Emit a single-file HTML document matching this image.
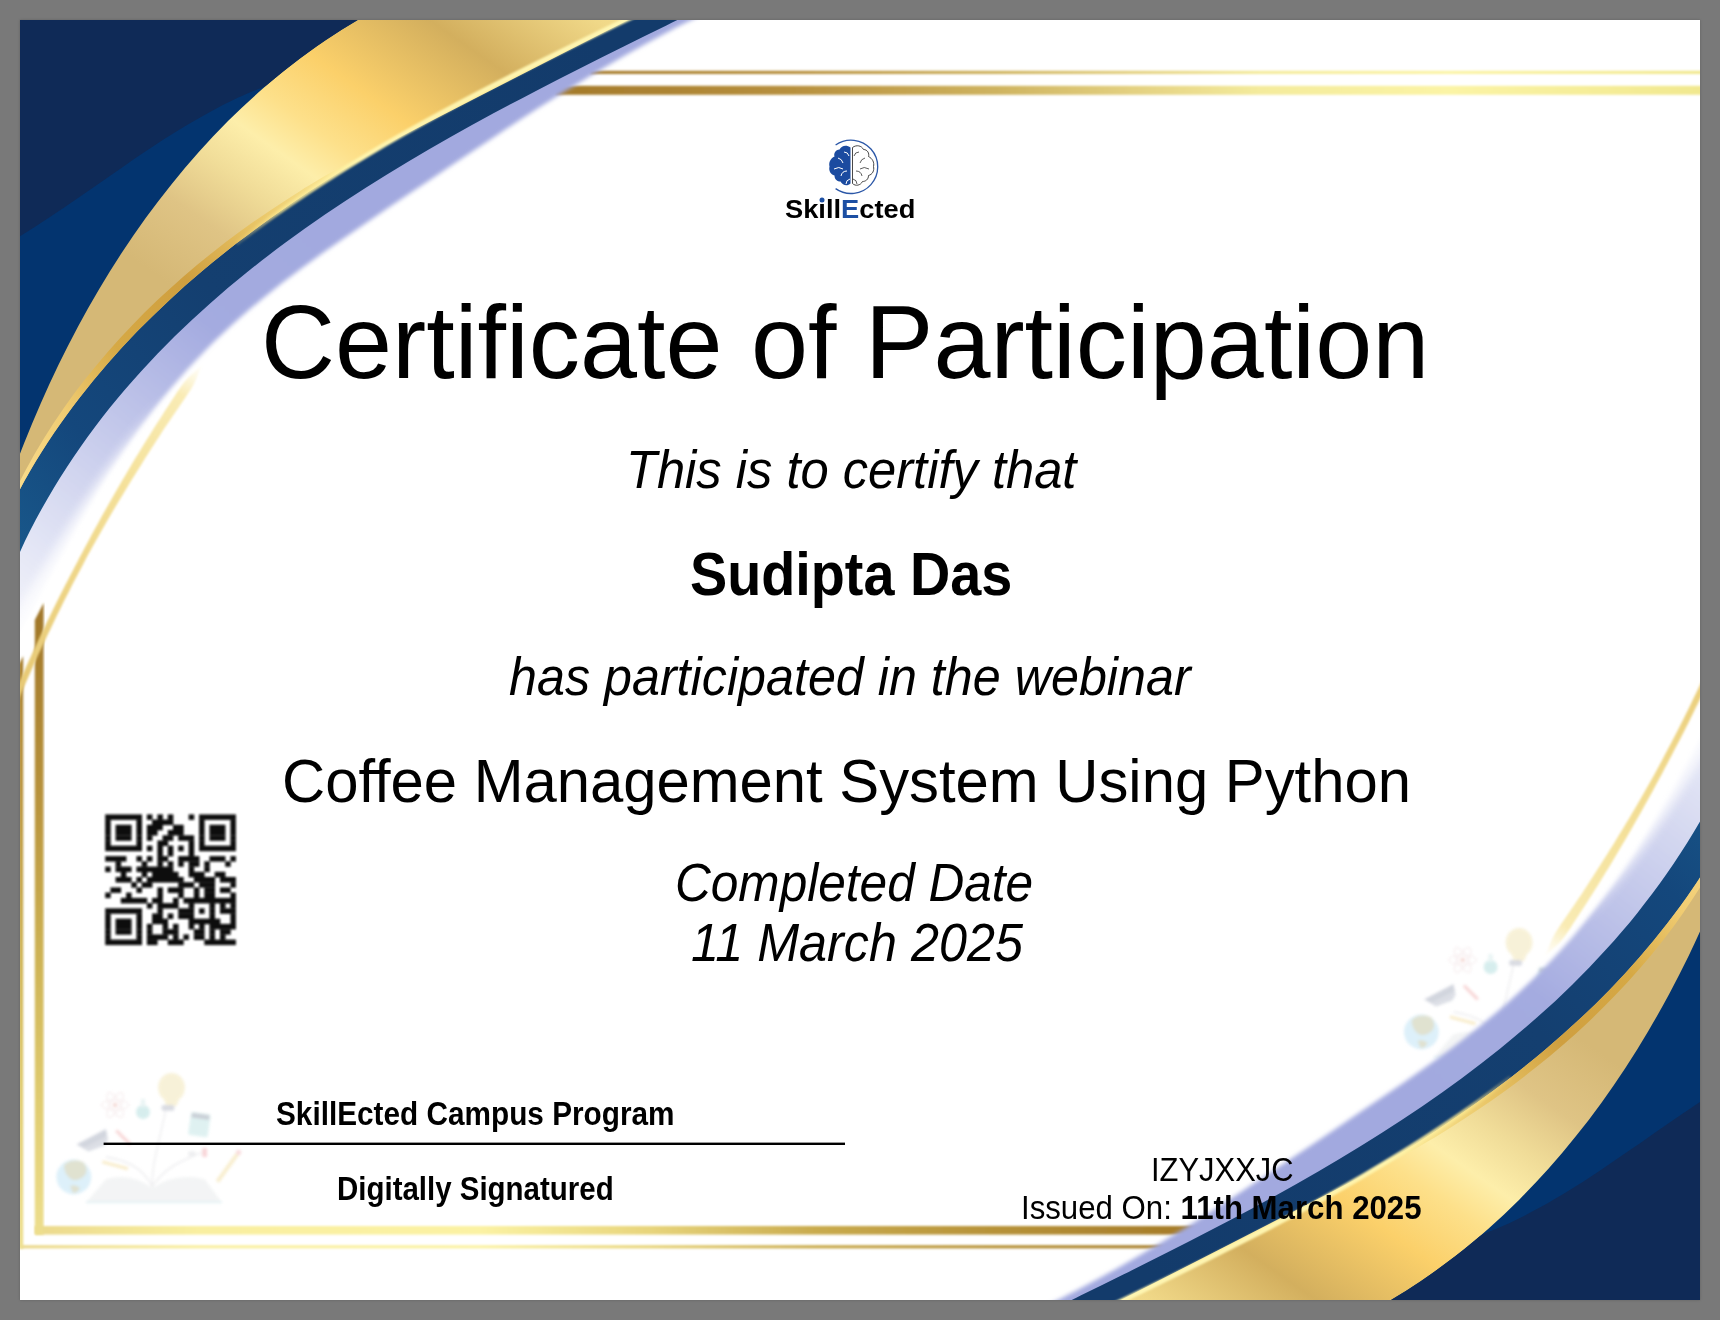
<!DOCTYPE html>
<html><head><meta charset="utf-8"><title>Certificate of Participation</title>
<style>
html,body{margin:0;padding:0}
body{width:1720px;height:1320px;background:#797979;position:relative;overflow:hidden;font-family:"Liberation Sans",sans-serif;color:#000}
#cert{position:absolute;left:20px;top:20px;width:1680px;height:1280px;background:#fff;box-shadow:0 0 2.5px rgba(0,0,0,.22)}
.t{position:absolute;white-space:nowrap;line-height:1;transform-origin:0 0}
.t i{font-style:italic}
</style></head><body>
<div id="cert"></div>
<svg width="1720" height="1320" viewBox="0 0 1720 1320" style="position:absolute;left:0;top:0">
<defs>
<clipPath id="cB"><path d="M399.9,-2.6C393.6,0.7 374.3,10.4 362.0,17.5C349.6,24.6 337.6,32.2 325.9,40.1C314.1,48.0 302.7,56.3 291.5,65.0C280.3,73.7 269.5,82.7 258.9,92.1C248.3,101.4 238.0,111.1 228.0,121.1C218.0,131.1 208.3,141.4 198.8,151.9C189.4,162.5 180.2,173.3 171.4,184.4C162.5,195.4 153.9,206.8 145.5,218.3C137.2,229.8 129.1,241.6 121.3,253.5C113.5,265.4 106.0,277.5 98.8,289.8C91.5,302.1 84.5,314.5 77.8,327.1C71.1,339.6 64.6,352.3 58.4,365.1C52.2,377.9 46.3,390.8 40.6,403.7C34.9,416.6 29.5,429.7 24.3,442.7C19.1,455.8 11.9,475.5 9.5,482.0L-10,482.0L-10,-10L399.9,-10Z"/></clipPath>
<clipPath id="cE"><path d="M718.1,6.9C710.3,10.7 686.8,22.0 671.5,30.0C656.2,38.0 641.1,46.3 626.2,54.7C611.2,63.2 596.5,72.0 581.9,80.9C567.2,89.8 552.8,98.9 538.3,108.1C523.9,117.3 509.6,126.7 495.3,136.2C480.9,145.6 466.7,155.2 452.4,164.8C438.1,174.4 423.8,184.0 409.5,193.6C395.1,203.3 380.7,212.9 366.4,222.7C352.1,232.4 337.7,242.2 323.7,252.3C309.6,262.3 295.6,272.5 282.0,283.1C268.5,293.7 255.1,304.5 242.2,315.8C229.4,327.1 216.9,338.8 204.9,350.9C193.0,363.1 181.5,375.7 170.5,388.7C159.5,401.7 148.9,415.2 138.8,428.9C128.6,442.7 118.9,456.9 109.6,471.3C100.3,485.7 91.5,500.5 82.8,515.4C74.2,530.3 66.1,545.7 57.9,560.8C49.6,576.0 41.7,591.3 33.3,606.3C24.9,621.4 11.8,643.4 7.5,650.9L-10,650.9L-10,-10L718.1,-10Z"/></clipPath>
<clipPath id="cp"><rect x="20" y="20" width="1680" height="1280"/></clipPath>
<filter id="b1" x="-5%" y="-5%" width="110%" height="110%"><feGaussianBlur stdDeviation="0.8"/></filter>
<filter id="b2" x="-5%" y="-5%" width="110%" height="110%"><feGaussianBlur stdDeviation="2"/></filter>
<filter id="b6" x="-20%" y="-20%" width="140%" height="140%"><feGaussianBlur stdDeviation="5"/></filter>
<filter id="bq" x="-5%" y="-5%" width="110%" height="110%"><feGaussianBlur stdDeviation="1.15"/></filter>
<filter id="b3" x="-5%" y="-5%" width="110%" height="110%"><feGaussianBlur stdDeviation="1.8"/></filter>
<linearGradient id="gG" gradientUnits="userSpaceOnUse" x1="600" y1="0" x2="324.5" y2="393">
<stop offset="0" stop-color="#f3dc8c"/><stop offset=".04" stop-color="#f0d888"/><stop offset=".238" stop-color="#d3af5e"/><stop offset=".44" stop-color="#fbd06a"/><stop offset=".56" stop-color="#fde08a"/><stop offset=".643" stop-color="#fdeeaa"/><stop offset=".74" stop-color="#f0dc98"/><stop offset=".85" stop-color="#dfc485"/><stop offset="1" stop-color="#d5b876"/>
</linearGradient>
<linearGradient id="gS" gradientUnits="userSpaceOnUse" x1="330" y1="170" x2="20" y2="490">
<stop offset="0" stop-color="#fbe896"/><stop offset=".2" stop-color="#e9c566"/><stop offset=".4" stop-color="#cf9f3f"/><stop offset=".62" stop-color="#d6a945"/><stop offset=".8" stop-color="#f0cc72"/><stop offset="1" stop-color="#f9dc8c"/>
</linearGradient>
<linearGradient id="gD" gradientUnits="userSpaceOnUse" x1="600" y1="40" x2="20" y2="540">
<stop offset="0" stop-color="#133b6b"/><stop offset=".6" stop-color="#143f70"/><stop offset=".85" stop-color="#14477c"/><stop offset="1" stop-color="#185689"/>
</linearGradient>
<linearGradient id="gP" gradientUnits="userSpaceOnUse" x1="330" y1="230" x2="20" y2="620">
<stop offset="0" stop-color="#a2a9df"/><stop offset=".3" stop-color="#a4abe0"/><stop offset=".55" stop-color="#c0c5e9"/><stop offset=".8" stop-color="#dcdff3"/><stop offset="1" stop-color="#f1f2fa"/>
</linearGradient>
<linearGradient id="gH" gradientUnits="userSpaceOnUse" x1="640" y1="20" x2="225" y2="255">
<stop offset="0" stop-color="#fff7b4"/><stop offset=".65" stop-color="#fff4ac"/><stop offset=".85" stop-color="#fbe88f" stop-opacity=".8"/><stop offset="1" stop-color="#f3d578" stop-opacity="0"/>
</linearGradient>
<linearGradient id="gF" gradientUnits="userSpaceOnUse" x1="203" y1="364" x2="20" y2="693">
<stop offset="0" stop-color="#fbf0c0" stop-opacity="0"/><stop offset=".1" stop-color="#f9ebb4"/><stop offset=".35" stop-color="#f5e29c"/><stop offset=".65" stop-color="#efd688"/><stop offset="1" stop-color="#e6c873"/>
</linearGradient>
<linearGradient id="gT" gradientUnits="userSpaceOnUse" x1="560" y1="0" x2="1700" y2="0">
<stop offset="0" stop-color="#a47a2a"/><stop offset=".21" stop-color="#b8913f"/><stop offset=".386" stop-color="#cfb460"/><stop offset=".5" stop-color="#e3d080"/><stop offset=".614" stop-color="#f4eb9c"/><stop offset=".78" stop-color="#fbf4a5"/><stop offset="1" stop-color="#f1e88f"/>
</linearGradient>
<linearGradient id="gBt" gradientUnits="userSpaceOnUse" x1="1200" y1="0" x2="20" y2="0">
<stop offset="0" stop-color="#a47a28"/><stop offset=".185" stop-color="#b8943a"/><stop offset=".326" stop-color="#c9ab4e"/><stop offset=".469" stop-color="#e8d57c"/><stop offset=".61" stop-color="#fbf2a3"/><stop offset=".85" stop-color="#f9efa0"/><stop offset="1" stop-color="#ead78a"/>
</linearGradient>
<linearGradient id="gV" gradientUnits="userSpaceOnUse" x1="0" y1="604" x2="0" y2="1248">
<stop offset="0" stop-color="#a07628"/><stop offset=".3" stop-color="#b8933c"/><stop offset=".54" stop-color="#cdb254"/><stop offset=".77" stop-color="#e0cc70"/><stop offset="1" stop-color="#eee090"/>
</linearGradient>
</defs>
<g clip-path="url(#cp)">
<g filter="url(#b1)">
<rect x="590" y="70.8" width="1120" height="3.2" fill="url(#gT)"/>
<rect x="555" y="85.8" width="1155" height="9" fill="url(#gT)"/>
<rect x="35" y="1226" width="1190" height="8.6" fill="url(#gBt)"/>
<rect x="20" y="1245.2" width="1230" height="3.2" fill="url(#gBt)"/>
</g>
<g id="il" filter="url(#b3)" opacity=".7">
<path d="M86,1202.600L105.800,1179.300Q130,1172 152.300,1188Q176,1172 204.700,1179.300L222,1202.600Z" fill="#eef0f1"/>
<rect x="86" y="1201" width="136" height="2.200" fill="#dcedf0"/>
<path d="M152.300,1188C151,1165 160,1140 165.500,1111M152,1186C142,1166 124,1160 106,1157M152.600,1186C166,1166 184,1160 203,1152" fill="none" stroke="#e3e3e6" stroke-width="1.300"/>
<ellipse cx="171.500" cy="1087.400" rx="13.400" ry="14.500" fill="#f5ecc8"/><path d="M162.500,1096h18l-4,10h-10z" fill="#f5ecc8"/><rect x="161.600" y="1105" width="12.800" height="5.700" rx="2" fill="#c9ccd6"/>
<circle cx="73.800" cy="1177" r="17.400" fill="#cfeaf8"/><path d="M64,1165q8,-7 19,-3q6,6 2,13q-5,6 -12,5q-9,-4 -9,-15z" fill="#d3d6bd"/><path d="M70,1186q6,-2 10,2q-2,5 -7,5z" fill="#d3d6bd"/>
<path d="M76.700,1144.400L105.800,1129.300L108.100,1139.800L104.700,1145.600L88.400,1151.400Z" fill="#cdd1db"/><path d="M76.700,1144.400L105.800,1129.300L107,1136L84,1147.500Z" fill="#bfc4d0"/>
<circle cx="143" cy="1112" r="7" fill="#c5e6e6"/><rect x="140.800" y="1099" width="4.400" height="8" fill="#e0f0f0"/>
<g fill="none" stroke="#f0e0e2" stroke-width="1"><ellipse cx="115.100" cy="1105" rx="14" ry="5"/><ellipse cx="115.100" cy="1105" rx="14" ry="5" transform="rotate(60 115.100 1105)"/><ellipse cx="115.100" cy="1105" rx="14" ry="5" transform="rotate(120 115.100 1105)"/></g><circle cx="115.100" cy="1105" r="2.200" fill="#efc6c0"/>
<g transform="rotate(8 199.400 1124.600)"><rect x="189.500" y="1113" width="19.800" height="23.300" rx="2" fill="#d2ecec"/><rect x="190.500" y="1114" width="17.800" height="4.600" fill="#b4bcc6"/></g>
<path d="M115.200,1131.600l2.200,-2.200l13.900,13.900l-2.200,2.200z" fill="#f4c3c3"/>
<path d="M101.900,1163.300l0.800,-2.900l25.600,6.900l-0.800,2.900z" fill="#f5e3b0"/>
<path d="M236.800,1151.400l3.200,2.400l-21,29l-3.200,-2.400z" fill="#f5e6b8"/><circle cx="238.600" cy="1152.400" r="2.600" fill="#f6cdd0"/>
<rect x="202.300" y="1148" width="4.700" height="9" fill="#f5c2c6"/><rect x="188.400" y="1151.400" width="7" height="4.600" fill="#e6e7ea"/>
</g>
<use href="#il" transform="translate(1347.6,-145)"/>
<g id="sw1">
<path d="M718.1,6.9C710.3,10.7 686.8,22.0 671.5,30.0C656.2,38.0 641.1,46.3 626.2,54.7C611.2,63.2 596.5,72.0 581.9,80.9C567.2,89.8 552.8,98.9 538.3,108.1C523.9,117.3 509.6,126.7 495.3,136.2C480.9,145.6 466.7,155.2 452.4,164.8C438.1,174.4 423.8,184.0 409.5,193.6C395.1,203.3 380.7,212.9 366.4,222.7C352.1,232.4 337.7,242.2 323.7,252.3C309.6,262.3 295.6,272.5 282.0,283.1C268.5,293.7 255.1,304.5 242.2,315.8C229.4,327.1 216.9,338.8 204.9,350.9C193.0,363.1 181.5,375.7 170.5,388.7C159.5,401.7 148.9,415.2 138.8,428.9C128.6,442.7 118.9,456.9 109.6,471.3C100.3,485.7 91.5,500.5 82.8,515.4C74.2,530.3 66.1,545.7 57.9,560.8C49.6,576.0 41.7,591.3 33.3,606.3C24.9,621.4 11.8,643.4 7.5,650.9L-10,650.9L-10,-10L718.1,-10Z" fill="url(#gP)" filter="url(#b2)"/>
<path d="M718.1,6.9C714.3,8.7 703.0,14.1 695.5,17.8C687.9,21.5 680.5,25.3 673.1,29.2C665.6,33.0 658.2,37.0 650.9,41.0C643.5,45.0 636.2,49.1 628.9,53.2C621.6,57.3 614.4,61.5 607.2,65.8C599.9,70.0 592.7,74.3 585.6,78.6C578.4,83.0 571.3,87.4 564.2,91.8C557.1,96.2 550.0,100.7 542.9,105.2C535.8,109.7 528.8,114.2 521.8,118.8C514.8,123.4 507.8,127.9 500.8,132.6C493.8,137.2 486.8,141.8 479.8,146.4C472.8,151.1 465.9,155.7 458.9,160.4C452.0,165.1 445.0,169.7 438.1,174.4C431.1,179.1 424.2,183.8 417.2,188.4C410.3,193.1 403.3,197.8 396.4,202.5C389.4,207.1 382.5,211.8 375.5,216.5C368.6,221.2 361.6,225.9 354.7,230.6C347.8,235.3 340.9,240.1 334.1,244.9C327.2,249.7 320.4,254.6 313.6,259.5C306.8,264.4 300.1,269.4 293.4,274.4C286.7,279.5 280.1,284.6 273.5,289.8C267.0,295.0 260.4,300.3 254.0,305.7C247.6,311.1 241.3,316.5 235.1,322.1C228.8,327.7 222.7,333.4 216.7,339.3C210.6,345.1 204.7,351.0 198.9,357.1C193.1,363.1 187.5,369.3 181.9,375.6C176.3,381.8 171.0,388.3 165.5,394.6C160.1,401.0 154.6,407.3 149.2,413.7C143.8,420.2 138.4,426.6 133.1,433.2C127.8,439.7 122.7,446.4 117.6,453.1C112.6,459.8 107.6,466.7 102.8,473.5C97.9,480.4 93.1,487.4 88.4,494.4C83.8,501.4 79.2,508.5 74.6,515.6C70.1,522.7 65.7,529.9 61.3,537.1C56.9,544.3 52.6,551.5 48.3,558.7C43.9,565.9 39.6,573.1 35.3,580.2C31.0,587.4 26.5,594.4 22.3,601.6C18.0,608.8 14.1,616.1 10.0,623.3C5.8,630.4 -0.6,641.0 -2.7,644.6L17.8,657.1C19.9,653.5 26.5,642.6 30.8,635.3C35.0,627.9 39.3,620.6 43.2,613.1C47.1,605.7 50.5,598.0 54.2,590.4C57.8,582.8 61.4,575.2 65.0,567.6C68.6,560.1 72.1,552.5 75.8,545.0C79.4,537.5 83.1,530.0 86.9,522.5C90.6,515.1 94.4,507.7 98.4,500.3C102.3,493.0 106.3,485.7 110.4,478.4C114.6,471.2 118.8,464.0 123.1,456.8C127.5,449.7 131.9,442.6 136.5,435.6C141.1,428.6 145.7,421.6 150.5,414.8C155.4,408.0 160.3,401.2 165.5,394.6C170.8,388.1 176.3,381.8 181.9,375.6C187.5,369.3 193.1,363.1 198.9,357.1C204.7,351.0 210.6,345.1 216.7,339.3C222.7,333.4 228.8,327.7 235.1,322.1C241.3,316.5 247.6,311.1 254.0,305.7C260.4,300.3 267.0,295.0 273.5,289.8C280.1,284.6 286.7,279.5 293.4,274.4C300.1,269.4 306.8,264.4 313.6,259.5C320.4,254.6 327.2,249.7 334.1,244.9C340.9,240.1 347.8,235.3 354.7,230.6C361.6,225.9 368.6,221.2 375.5,216.5C382.5,211.8 389.4,207.1 396.4,202.5C403.3,197.8 410.3,193.1 417.2,188.4C424.2,183.8 431.1,179.1 438.1,174.4C445.0,169.7 452.0,165.1 458.9,160.4C465.9,155.7 472.8,151.1 479.8,146.4C486.8,141.8 493.8,137.2 500.8,132.6C507.8,127.9 514.8,123.4 521.8,118.8C528.8,114.2 535.8,109.7 542.9,105.2C550.0,100.7 557.1,96.2 564.2,91.8C571.3,87.4 578.4,83.0 585.6,78.6C592.7,74.3 599.9,70.0 607.2,65.8C614.4,61.5 621.6,57.3 628.9,53.2C636.2,49.1 643.5,45.0 650.9,41.0C658.2,37.0 665.6,33.0 673.1,29.2C680.5,25.3 687.9,21.5 695.5,17.8C703.0,14.1 714.3,8.7 718.1,6.9Z" fill="#fff" opacity=".75" filter="url(#b6)"/>
</g>
<use href="#sw1" transform="translate(1747,1321) rotate(180)"/>
<g filter="url(#b1)">
<path d="M34.8,1234.6V620L43.6,603V1234.6Z" fill="url(#gV)"/>
<path d="M19,1248.4V664L23.2,656V1248.4Z" fill="url(#gV)"/>
</g>
<g id="sw2">
<path d="M709.1,4.4C701.9,7.9 680.7,18.3 666.4,25.4C652.1,32.4 637.6,39.5 623.2,46.7C608.8,53.8 594.3,61.1 579.8,68.4C565.3,75.7 550.8,83.1 536.4,90.7C521.9,98.2 507.4,105.8 493.0,113.6C478.7,121.4 464.3,129.2 450.1,137.3C435.8,145.4 421.6,153.6 407.6,162.0C393.5,170.4 379.6,178.9 365.8,187.7C352.1,196.5 338.4,205.4 325.0,214.6C311.5,223.8 298.2,233.2 285.2,242.8C272.2,252.5 259.3,262.3 246.7,272.5C234.2,282.6 221.8,293.0 209.8,303.7C197.7,314.4 185.9,325.4 174.5,336.6C163.0,347.9 151.8,359.5 141.0,371.4C130.2,383.3 119.7,395.5 109.6,408.1C99.6,420.7 89.8,433.6 80.5,446.9C71.2,460.2 62.3,473.9 53.8,487.9C45.4,502.0 37.3,516.4 29.8,531.3C22.3,546.2 12.1,569.5 8.6,577.1L-10,577.1L-10,-10L709.1,-10Z" fill="url(#gD)"/>
<path d="M659.1,4.0C652.5,7.1 633.1,16.5 620.0,22.7C606.9,29.0 593.8,35.4 580.6,41.8C567.4,48.2 554.2,54.6 541.0,61.2C527.8,67.8 514.6,74.4 501.4,81.2C488.2,87.9 475.0,94.7 461.9,101.7C448.8,108.7 435.7,115.7 422.7,123.0C409.7,130.2 396.8,137.5 383.9,145.0C371.1,152.6 358.4,160.2 345.7,168.0C333.1,175.9 320.6,183.9 308.3,192.1C296.0,200.3 283.7,208.6 271.7,217.2C259.7,225.8 247.9,234.6 236.2,243.6C224.6,252.6 213.1,261.8 201.9,271.3C190.7,280.7 179.7,290.4 169.0,300.4C158.2,310.4 147.7,320.6 137.5,331.1C127.3,341.6 117.4,352.3 107.7,363.4C98.1,374.4 88.8,385.8 79.8,397.4C70.8,409.1 62.1,421.0 53.8,433.3C45.5,445.6 37.5,458.2 29.9,471.2C22.4,484.1 12.0,504.4 8.4,511.1L-10,511.1L-10,-10L659.1,-10Z" fill="url(#gG)"/>
<path d="M331.6,172.1C326.5,175.2 310.8,184.3 300.6,190.7C290.4,197.1 280.2,203.6 270.2,210.4C260.2,217.1 250.3,224.0 240.6,231.1C230.9,238.2 221.3,245.5 211.9,253.0C202.5,260.4 193.2,268.1 184.1,276.0C175.1,283.8 166.2,291.9 157.5,300.1C148.8,308.3 140.2,316.8 132.0,325.4C123.7,334.0 115.6,342.9 107.7,351.9C99.9,361.0 92.2,370.2 84.9,379.6C77.5,389.1 70.3,398.7 63.5,408.6C56.6,418.5 50.0,428.5 43.7,438.8C37.4,449.1 31.3,459.6 25.6,470.3C19.8,481.0 11.9,497.6 9.2,503.1L8.4,511.1C12.0,504.4 22.4,484.1 29.9,471.2C37.5,458.2 45.5,445.6 53.8,433.3C62.1,421.0 70.8,409.1 79.8,397.4C88.8,385.8 98.1,374.4 107.7,363.4C117.4,352.3 127.3,341.6 137.5,331.1C147.7,320.6 158.2,310.4 169.0,300.4C179.7,290.4 190.7,280.7 201.9,271.3C213.1,261.8 224.6,252.6 236.2,243.6C247.9,234.6 259.7,225.8 271.7,217.2C283.7,208.6 296.0,200.3 308.3,192.1C320.6,183.9 333.1,175.9 345.7,168.0C358.4,160.2 371.1,152.6 383.9,145.0C396.8,137.5 409.7,130.2 422.7,123.0C435.7,115.7 448.8,108.7 461.9,101.7C475.0,94.7 488.2,87.9 501.4,81.2C514.6,74.4 527.8,67.8 541.0,61.2C554.2,54.6 567.4,48.2 580.6,41.8C593.8,35.4 606.9,29.0 620.0,22.7C633.1,16.5 652.5,7.1 659.1,4.0Z" fill="url(#gS)"/>
<path d="M659.1,4.0C652.5,7.1 633.1,16.5 620.0,22.7C606.9,29.0 593.8,35.4 580.6,41.8C567.4,48.2 554.2,54.6 541.0,61.2C527.8,67.8 514.6,74.4 501.4,81.2C488.2,87.9 475.0,94.7 461.9,101.7C448.8,108.7 435.7,115.7 422.7,123.0C409.7,130.2 396.8,137.5 383.9,145.0C371.1,152.6 358.4,160.2 345.7,168.0C333.1,175.9 320.6,183.9 308.3,192.1C296.0,200.3 283.7,208.6 271.7,217.2C259.7,225.8 242.1,239.2 236.2,243.6" fill="none" stroke="url(#gH)" stroke-width="4.6" filter="url(#b1)"/>
<path d="M399.9,-2.6C393.6,0.7 374.3,10.4 362.0,17.5C349.6,24.6 337.6,32.2 325.9,40.1C314.1,48.0 302.7,56.3 291.5,65.0C280.3,73.7 269.5,82.7 258.9,92.1C248.3,101.4 238.0,111.1 228.0,121.1C218.0,131.1 208.3,141.4 198.8,151.9C189.4,162.5 180.2,173.3 171.4,184.4C162.5,195.4 153.9,206.8 145.5,218.3C137.2,229.8 129.1,241.6 121.3,253.5C113.5,265.4 106.0,277.5 98.8,289.8C91.5,302.1 84.5,314.5 77.8,327.1C71.1,339.6 64.6,352.3 58.4,365.1C52.2,377.9 46.3,390.8 40.6,403.7C34.9,416.6 29.5,429.7 24.3,442.7C19.1,455.8 11.9,475.5 9.5,482.0L-10,482.0L-10,-10L399.9,-10Z" fill="#03346f"/>
<path d="M270.3,84.3C264.9,86.6 248.8,92.8 238.3,97.6C227.9,102.4 217.7,107.7 207.7,113.2C197.6,118.6 187.8,124.5 178.0,130.5C168.3,136.4 158.7,142.7 149.1,149.0C139.6,155.3 130.1,161.9 120.7,168.4C111.3,174.9 101.9,181.5 92.5,188.1C83.1,194.6 73.7,201.2 64.2,207.6C54.7,214.0 45.2,220.4 35.5,226.5C25.9,232.7 11.2,241.4 6.3,244.4L-10,244.4L-10,-10L800,-10L800,84.3Z" fill="#0f2a57" clip-path="url(#cB)"/>
<path d="M202.3,364.5C201.0,365.7 197.2,369.3 194.6,371.8C192.0,374.2 189.3,376.5 186.9,379.1C184.5,381.7 182.5,384.5 180.5,387.3C178.4,390.1 176.6,393.1 174.7,396.0C172.8,398.9 170.9,401.8 169.0,404.7C167.1,407.6 165.2,410.5 163.3,413.4C161.5,416.3 159.6,419.3 157.7,422.2C155.9,425.1 154.0,428.0 152.2,431.0C150.3,433.9 148.5,436.9 146.7,439.8C144.8,442.8 143.0,445.7 141.2,448.7C139.4,451.6 137.6,454.6 135.8,457.6C134.0,460.5 132.2,463.5 130.5,466.5C128.7,469.5 126.9,472.5 125.2,475.5C123.4,478.4 121.6,481.4 119.9,484.4C118.2,487.4 116.4,490.4 114.7,493.5C113.0,496.5 111.3,499.5 109.6,502.5C107.9,505.5 106.2,508.5 104.5,511.6C102.8,514.6 101.1,517.6 99.4,520.7C97.8,523.7 96.1,526.8 94.4,529.8C92.8,532.9 91.1,535.9 89.5,539.0C87.9,542.0 86.2,545.1 84.6,548.1C83.0,551.2 81.4,554.3 79.7,557.3C78.1,560.4 76.5,563.5 74.9,566.5C73.3,569.6 71.7,572.7 70.1,575.7C68.5,578.8 66.9,581.9 65.3,585.0C63.7,588.1 62.2,591.2 60.6,594.3C59.0,597.4 57.5,600.5 56.0,603.6C54.4,606.7 52.9,609.8 51.4,612.9C49.8,616.0 48.3,619.1 46.8,622.3C45.3,625.4 43.8,628.5 42.3,631.6C40.8,634.8 39.4,637.9 37.9,641.1C36.4,644.2 35.0,647.3 33.5,650.5C32.1,653.6 30.6,656.8 29.2,660.0C27.7,663.1 26.3,666.3 24.9,669.4C23.5,672.6 22.1,675.8 20.7,678.9C19.3,682.1 17.9,685.3 16.5,688.5C15.1,691.7 13.8,694.8 12.4,698.0C11.1,701.2 9.7,704.4 8.4,707.6C7.0,710.8 5.0,715.6 4.4,717.2L10.1,719.6C10.8,718.0 12.7,713.2 14.1,710.0C15.4,706.8 16.8,703.6 18.1,700.5C19.5,697.3 20.8,694.1 22.2,690.9C23.6,687.8 25.0,684.6 26.4,681.4C27.8,678.3 29.2,675.1 30.6,672.0C32.0,668.8 33.4,665.7 34.8,662.5C36.2,659.4 37.7,656.2 39.1,653.1C40.6,649.9 42.0,646.8 43.5,643.7C45.0,640.6 46.4,637.4 47.9,634.3C49.4,631.2 50.9,628.1 52.4,625.0C53.9,621.8 55.4,618.7 56.9,615.6C58.4,612.5 60.0,609.4 61.5,606.3C63.0,603.2 64.6,600.1 66.1,597.1C67.7,594.0 69.3,590.9 70.8,587.8C72.4,584.7 74.0,581.7 75.6,578.6C77.2,575.5 78.8,572.5 80.4,569.4C82.0,566.4 83.6,563.3 85.2,560.2C86.8,557.2 88.5,554.2 90.2,551.1C91.8,548.1 93.5,545.1 95.2,542.1C96.9,539.1 98.6,536.1 100.3,533.0C102.0,530.0 103.7,527.0 105.4,524.0C107.1,521.1 108.9,518.1 110.6,515.1C112.4,512.1 114.1,509.1 115.9,506.1C117.6,503.2 119.4,500.2 121.2,497.2C122.9,494.3 124.7,491.3 126.5,488.4C128.3,485.4 130.1,482.5 131.9,479.5C133.7,476.6 135.5,473.6 137.4,470.7C139.2,467.8 141.0,464.8 142.9,461.9C144.7,459.0 146.5,456.1 148.4,453.2C150.3,450.3 152.1,447.4 154.0,444.5C155.9,441.6 157.8,438.7 159.7,435.8C161.5,432.9 163.4,430.0 165.3,427.1C167.3,424.2 169.2,421.4 171.1,418.5C173.0,415.6 174.9,412.8 176.9,409.9C178.8,407.1 180.8,404.2 182.7,401.4C184.7,398.5 186.8,395.8 188.6,392.8C190.5,389.9 192.4,387.0 193.9,383.9C195.5,380.8 196.7,377.4 198.1,374.2C199.5,371.0 201.6,366.1 202.3,364.5Z" fill="url(#gF)" filter="url(#b1)"/>
</g>
<use href="#sw2" transform="translate(1747,1321) rotate(180)"/>
<g filter="url(#bq)" fill="#0c0c0c"><rect x="105.2" y="814.4" width="36.8" height="5.5"/><rect x="146.9" y="814.4" width="5.5" height="5.5"/><rect x="157.4" y="814.4" width="5.5" height="5.5"/><rect x="167.8" y="814.4" width="5.5" height="5.5"/><rect x="188.7" y="814.4" width="5.5" height="5.5"/><rect x="199.1" y="814.4" width="36.8" height="5.5"/><rect x="105.2" y="819.6" width="5.5" height="5.5"/><rect x="136.5" y="819.6" width="5.5" height="5.5"/><rect x="152.1" y="819.6" width="21.2" height="5.5"/><rect x="199.1" y="819.6" width="5.5" height="5.5"/><rect x="230.4" y="819.6" width="5.5" height="5.5"/><rect x="105.2" y="824.8" width="5.5" height="5.5"/><rect x="115.6" y="824.8" width="15.9" height="5.5"/><rect x="136.5" y="824.8" width="5.5" height="5.5"/><rect x="146.9" y="824.8" width="15.9" height="5.5"/><rect x="173.0" y="824.8" width="10.7" height="5.5"/><rect x="199.1" y="824.8" width="5.5" height="5.5"/><rect x="209.5" y="824.8" width="15.9" height="5.5"/><rect x="230.4" y="824.8" width="5.5" height="5.5"/><rect x="105.2" y="830.0" width="5.5" height="5.5"/><rect x="115.6" y="830.0" width="15.9" height="5.5"/><rect x="136.5" y="830.0" width="5.5" height="5.5"/><rect x="146.9" y="830.0" width="10.7" height="5.5"/><rect x="167.8" y="830.0" width="15.9" height="5.5"/><rect x="199.1" y="830.0" width="5.5" height="5.5"/><rect x="209.5" y="830.0" width="15.9" height="5.5"/><rect x="230.4" y="830.0" width="5.5" height="5.5"/><rect x="105.2" y="835.3" width="5.5" height="5.5"/><rect x="115.6" y="835.3" width="15.9" height="5.5"/><rect x="136.5" y="835.3" width="5.5" height="5.5"/><rect x="146.9" y="835.3" width="5.5" height="5.5"/><rect x="162.6" y="835.3" width="10.7" height="5.5"/><rect x="178.2" y="835.3" width="15.9" height="5.5"/><rect x="199.1" y="835.3" width="5.5" height="5.5"/><rect x="209.5" y="835.3" width="15.9" height="5.5"/><rect x="230.4" y="835.3" width="5.5" height="5.5"/><rect x="105.2" y="840.5" width="5.5" height="5.5"/><rect x="136.5" y="840.5" width="5.5" height="5.5"/><rect x="157.4" y="840.5" width="10.7" height="5.5"/><rect x="188.7" y="840.5" width="5.5" height="5.5"/><rect x="199.1" y="840.5" width="5.5" height="5.5"/><rect x="230.4" y="840.5" width="5.5" height="5.5"/><rect x="105.2" y="845.7" width="36.8" height="5.5"/><rect x="146.9" y="845.7" width="5.5" height="5.5"/><rect x="157.4" y="845.7" width="5.5" height="5.5"/><rect x="167.8" y="845.7" width="5.5" height="5.5"/><rect x="178.2" y="845.7" width="5.5" height="5.5"/><rect x="188.7" y="845.7" width="5.5" height="5.5"/><rect x="199.1" y="845.7" width="36.8" height="5.5"/><rect x="157.4" y="850.9" width="5.5" height="5.5"/><rect x="167.8" y="850.9" width="5.5" height="5.5"/><rect x="188.7" y="850.9" width="5.5" height="5.5"/><rect x="105.2" y="856.1" width="21.2" height="5.5"/><rect x="136.5" y="856.1" width="5.5" height="5.5"/><rect x="146.9" y="856.1" width="5.5" height="5.5"/><rect x="157.4" y="856.1" width="10.7" height="5.5"/><rect x="178.2" y="856.1" width="21.2" height="5.5"/><rect x="209.5" y="856.1" width="15.9" height="5.5"/><rect x="230.4" y="856.1" width="5.5" height="5.5"/><rect x="115.6" y="861.3" width="5.5" height="5.5"/><rect x="141.7" y="861.3" width="5.5" height="5.5"/><rect x="157.4" y="861.3" width="5.5" height="5.5"/><rect x="167.8" y="861.3" width="5.5" height="5.5"/><rect x="178.2" y="861.3" width="5.5" height="5.5"/><rect x="188.7" y="861.3" width="10.7" height="5.5"/><rect x="204.3" y="861.3" width="5.5" height="5.5"/><rect x="225.2" y="861.3" width="5.5" height="5.5"/><rect x="105.2" y="866.6" width="5.5" height="5.5"/><rect x="115.6" y="866.6" width="15.9" height="5.5"/><rect x="136.5" y="866.6" width="36.8" height="5.5"/><rect x="188.7" y="866.6" width="5.5" height="5.5"/><rect x="204.3" y="866.6" width="5.5" height="5.5"/><rect x="120.8" y="871.8" width="5.5" height="5.5"/><rect x="141.7" y="871.8" width="5.5" height="5.5"/><rect x="152.1" y="871.8" width="26.4" height="5.5"/><rect x="188.7" y="871.8" width="15.9" height="5.5"/><rect x="214.7" y="871.8" width="10.7" height="5.5"/><rect x="115.6" y="877.0" width="15.9" height="5.5"/><rect x="136.5" y="877.0" width="5.5" height="5.5"/><rect x="146.9" y="877.0" width="36.8" height="5.5"/><rect x="193.9" y="877.0" width="21.2" height="5.5"/><rect x="220.0" y="877.0" width="15.9" height="5.5"/><rect x="131.3" y="882.2" width="5.5" height="5.5"/><rect x="141.7" y="882.2" width="10.7" height="5.5"/><rect x="178.2" y="882.2" width="15.9" height="5.5"/><rect x="199.1" y="882.2" width="15.9" height="5.5"/><rect x="230.4" y="882.2" width="5.5" height="5.5"/><rect x="110.4" y="887.4" width="10.7" height="5.5"/><rect x="136.5" y="887.4" width="5.5" height="5.5"/><rect x="157.4" y="887.4" width="5.5" height="5.5"/><rect x="167.8" y="887.4" width="15.9" height="5.5"/><rect x="193.9" y="887.4" width="5.5" height="5.5"/><rect x="204.3" y="887.4" width="10.7" height="5.5"/><rect x="220.0" y="887.4" width="10.7" height="5.5"/><rect x="105.2" y="892.6" width="5.5" height="5.5"/><rect x="126.1" y="892.6" width="5.5" height="5.5"/><rect x="157.4" y="892.6" width="5.5" height="5.5"/><rect x="178.2" y="892.6" width="5.5" height="5.5"/><rect x="193.9" y="892.6" width="5.5" height="5.5"/><rect x="204.3" y="892.6" width="10.7" height="5.5"/><rect x="230.4" y="892.6" width="5.5" height="5.5"/><rect x="120.8" y="897.9" width="26.4" height="5.5"/><rect x="152.1" y="897.9" width="10.7" height="5.5"/><rect x="173.0" y="897.9" width="5.5" height="5.5"/><rect x="183.4" y="897.9" width="52.5" height="5.5"/><rect x="146.9" y="903.1" width="5.5" height="5.5"/><rect x="157.4" y="903.1" width="21.2" height="5.5"/><rect x="188.7" y="903.1" width="5.5" height="5.5"/><rect x="209.5" y="903.1" width="5.5" height="5.5"/><rect x="220.0" y="903.1" width="5.5" height="5.5"/><rect x="230.4" y="903.1" width="5.5" height="5.5"/><rect x="105.2" y="908.3" width="36.8" height="5.5"/><rect x="157.4" y="908.3" width="5.5" height="5.5"/><rect x="178.2" y="908.3" width="15.9" height="5.5"/><rect x="199.1" y="908.3" width="5.5" height="5.5"/><rect x="209.5" y="908.3" width="5.5" height="5.5"/><rect x="220.0" y="908.3" width="15.9" height="5.5"/><rect x="105.2" y="913.5" width="5.5" height="5.5"/><rect x="136.5" y="913.5" width="5.5" height="5.5"/><rect x="152.1" y="913.5" width="10.7" height="5.5"/><rect x="167.8" y="913.5" width="5.5" height="5.5"/><rect x="178.2" y="913.5" width="15.9" height="5.5"/><rect x="209.5" y="913.5" width="5.5" height="5.5"/><rect x="230.4" y="913.5" width="5.5" height="5.5"/><rect x="105.2" y="918.7" width="5.5" height="5.5"/><rect x="115.6" y="918.7" width="15.9" height="5.5"/><rect x="136.5" y="918.7" width="5.5" height="5.5"/><rect x="152.1" y="918.7" width="15.9" height="5.5"/><rect x="188.7" y="918.7" width="31.6" height="5.5"/><rect x="230.4" y="918.7" width="5.5" height="5.5"/><rect x="105.2" y="923.9" width="5.5" height="5.5"/><rect x="115.6" y="923.9" width="15.9" height="5.5"/><rect x="136.5" y="923.9" width="5.5" height="5.5"/><rect x="146.9" y="923.9" width="5.5" height="5.5"/><rect x="162.6" y="923.9" width="5.5" height="5.5"/><rect x="173.0" y="923.9" width="5.5" height="5.5"/><rect x="188.7" y="923.9" width="5.5" height="5.5"/><rect x="199.1" y="923.9" width="5.5" height="5.5"/><rect x="209.5" y="923.9" width="26.4" height="5.5"/><rect x="105.2" y="929.2" width="5.5" height="5.5"/><rect x="115.6" y="929.2" width="15.9" height="5.5"/><rect x="136.5" y="929.2" width="5.5" height="5.5"/><rect x="146.9" y="929.2" width="5.5" height="5.5"/><rect x="162.6" y="929.2" width="15.9" height="5.5"/><rect x="193.9" y="929.2" width="10.7" height="5.5"/><rect x="209.5" y="929.2" width="5.5" height="5.5"/><rect x="220.0" y="929.2" width="10.7" height="5.5"/><rect x="105.2" y="934.4" width="5.5" height="5.5"/><rect x="136.5" y="934.4" width="5.5" height="5.5"/><rect x="146.9" y="934.4" width="21.2" height="5.5"/><rect x="173.0" y="934.4" width="5.5" height="5.5"/><rect x="183.4" y="934.4" width="5.5" height="5.5"/><rect x="193.9" y="934.4" width="10.7" height="5.5"/><rect x="209.5" y="934.4" width="5.5" height="5.5"/><rect x="220.0" y="934.4" width="5.5" height="5.5"/><rect x="105.2" y="939.6" width="36.8" height="5.5"/><rect x="146.9" y="939.6" width="10.7" height="5.5"/><rect x="167.8" y="939.6" width="15.9" height="5.5"/><rect x="204.3" y="939.6" width="31.6" height="5.5"/></g>
<g id="logo">
<path d="M835.600,145A26.700,26.700 0 1 1 835.600,188.600" fill="none" stroke="#2b57a7" stroke-width="1.300"/>
<path d="M850.500,147.500c-4,-3 -9,-2 -11,2c-4,0 -6,4 -5,7c-4,2 -6,6 -5,10c-1,4 1,8 5,9c0,4 3,6 6,6c2,4 7,5 10,2z" fill="#1b4ba0"/>
<path d="M838,158q4,1 5,5M834,169q5,-3 9,0M841,176q1,-5 6,-5M844,152q4,0 5,4M846,184q0,-4 4,-5" fill="none" stroke="#fff" stroke-width="1"/>
<path d="M852.500,147.500c4,-3 9,-2 11,2c4,0 6,4 5,7c4,2 6,6 5,10c1,4 -1,8 -5,9c0,4 -3,6 -6,6c-2,4 -7,5 -10,2z" fill="#fff" stroke="#333" stroke-width="0.900"/>
<path d="M865,158q-4,1 -5,5M869,169q-5,-3 -9,0M862,176q-1,-5 -6,-5M859,152q-4,0 -5,4M857,184q0,-4 -4,-5" fill="none" stroke="#333" stroke-width="0.800"/>
</g>
<rect x="103.600" y="1142.600" width="741.400" height="2.400" fill="#000"/>
</g>
</svg>
<div class="t" style="left:260.72px;top:291.00px;font-size:103.0px;transform:scaleX(0.9954)">Certificate of Participation</div>
<div class="t" style="left:625.92px;top:442.90px;font-size:53.0px;font-style:italic;transform:scaleX(0.9558)">This is to certify that</div>
<div class="t" style="left:689.80px;top:542.50px;font-size:62.0px;font-weight:700;transform:scaleX(0.8994)">Sudipta Das</div>
<div class="t" style="left:509.25px;top:649.60px;font-size:53.0px;font-style:italic;transform:scaleX(0.9482)">has participated in the webinar</div>
<div class="t" style="left:281.91px;top:750.00px;font-size:62.0px;transform:scaleX(0.9644)">Coffee Management System Using Python</div>
<div class="t" style="left:675.09px;top:856.40px;font-size:53.0px;font-style:italic;transform:scaleX(0.9352)">Completed Date</div>
<div class="t" style="left:691.45px;top:915.70px;font-size:53.0px;font-style:italic;transform:scaleX(0.9493)">11 March 2025</div>
<div class="t" style="left:275.70px;top:1096.80px;font-size:33.0px;font-weight:700;transform:scaleX(0.9016)">SkillEcted Campus Program</div>
<div class="t" style="left:336.71px;top:1171.60px;font-size:33.0px;font-weight:700;transform:scaleX(0.8928)">Digitally Signatured</div>
<div class="t" style="left:1151.19px;top:1152.70px;font-size:33.0px;transform:scaleX(0.9365)">IZYJXXJC</div>
<div class="t" style="left:1021.16px;top:1190.70px;font-size:33.0px;transform:scaleX(0.9452)">Issued On: <b>11th March 2025</b></div>
<div class="t" style="left:784.95px;top:196.30px;font-size:26.0px;font-weight:700;transform:scaleX(1.0492)">Skill<span style="color:#1c4fa3">E</span>cted</div>
<svg width="8" height="8" viewBox="0 0 8 8" style="position:absolute;left:818.3px;top:196.300px"><circle cx="4" cy="4" r="2.500" fill="#1c4fa3"/></svg>
</body></html>
